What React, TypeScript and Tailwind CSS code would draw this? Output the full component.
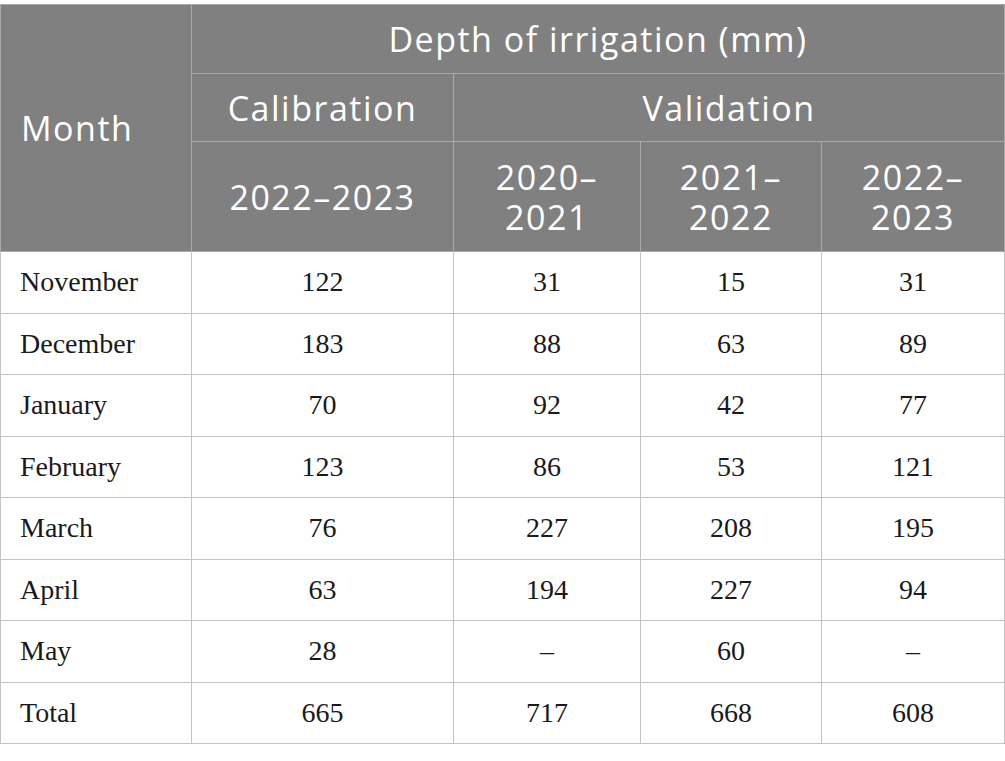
import React from 'react';

const rows: [string, string, string, string, string][] = [
  ['November', '122', '31', '15', '31'],
  ['December', '183', '88', '63', '89'],
  ['January', '70', '92', '42', '77'],
  ['February', '123', '86', '53', '121'],
  ['March', '76', '227', '208', '195'],
  ['April', '63', '194', '227', '94'],
  ['May', '28', '–', '60', '–'],
  ['Total', '665', '717', '668', '608'],
];

const head = 'border border-[#a9a9a9] bg-[#808080] text-center font-normal text-white';
const cell = 'border border-[#c4c4c4] text-center';

export default function App() {
  return (
    <div className="min-h-screen bg-white pt-1">
      <table className="w-[1004px] table-fixed border-collapse">
        <colgroup>
          <col className="w-[191px]" />
          <col className="w-[262px]" />
          <col className="w-[187px]" />
          <col className="w-[181px]" />
          <col className="w-[183px]" />
        </colgroup>
        <thead className="font-['Open_Sans',sans-serif] text-[34px] leading-[40px] tracking-[1.5px]">
          <tr className="h-[69px]">
            <th rowSpan={3} className={`${head} pl-[20px] text-left`}>Month</th>
            <th colSpan={4} className={head}>Depth of irrigation (mm)</th>
          </tr>
          <tr className="h-[68px]">
            <th className={head}>Calibration</th>
            <th colSpan={3} className={head}>Validation</th>
          </tr>
          <tr className="h-[110px]">
            <th className={head}>2022–2023</th>
            <th className={head}>2020–<br />2021</th>
            <th className={head}>2021–<br />2022</th>
            <th className={head}>2022–<br />2023</th>
          </tr>
        </thead>
        <tbody className="font-['Liberation_Serif',serif] text-[28px] text-[#1a1a1a]">
          {rows.map((r) => (
            <tr key={r[0]} className="h-[61.5px]">
              <td className={`${cell} pl-[19px] text-left`}>{r[0]}</td>
              <td className={cell}>{r[1]}</td>
              <td className={cell}>{r[2]}</td>
              <td className={cell}>{r[3]}</td>
              <td className={cell}>{r[4]}</td>
            </tr>
          ))}
        </tbody>
      </table>
    </div>
  );
}
